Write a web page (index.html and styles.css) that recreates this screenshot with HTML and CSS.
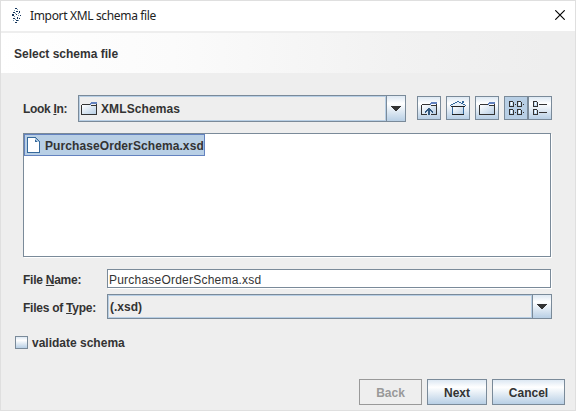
FILE: index.html
```html
<!DOCTYPE html>
<html lang="en">
<head>
<meta charset="utf-8">
<title>Import XML schema file</title>
<link rel="stylesheet" href="styles.css">
</head>
<body>
<main class="window">
  <header class="titlebar">
    <svg class="logo" width="12" height="18" viewBox="0 0 12 18" shape-rendering="crispEdges"><path d="M3 1h2v1H3zM4 4h2v1H4zM1 5h2v1H1zM7 4h1v2H7zM0 7h2v2H0zM4 7h1v1H4zM8 8h1v1H8zM1 11h2v1H1zM5 10h1v2H5zM7 11h1v1H7zM4 13h2v1H4zM3 15h2v1H3z" fill="#17365c"/><path d="M5 2h1v1H5zM2 3h1v1H2zM3 6h1v1H3zM6 6h1v1H6zM2 9h1v1H2zM6 8h1v1H6zM3 12h1v1H3zM1 13h1v1H1zM6 13h1v1H6z" fill="#7899b0"/></svg>
    <span class="title">Import XML schema file</span>
    <svg class="close" width="10" height="10" viewBox="0 0 10 10"><path d="M.3.3l9.4 9.4M9.7.3L.3 9.7" stroke="#000" stroke-width="1.15"/></svg>
  </header>
  <section class="banner">Select schema file</section>
  <section class="content">
    <div class="row look">
      <label class="look-label">Look <u>I</u>n:</label>
      <div class="combo look-combo">
        <div class="value">
          <svg width="16" height="13" viewBox="0 0 16 13" shape-rendering="crispEdges"><use href="#folder"/></svg>
          <span class="folder-name">XMLSchemas</span>
        </div>
        <div class="arrow"><svg width="10" height="5" viewBox="0 0 10 5" shape-rendering="crispEdges"><path d="M0 0h10v1H9v1H8v1H7v1H6v1H4V4H3V3H2V2H1V1H0z" fill="#333"/></svg></div>
      </div>
      <div class="tools">
        <button class="tool"><svg width="16" height="13" viewBox="0 0 16 13" shape-rendering="crispEdges"><use href="#folder"/><path d="M6 11h4v2H6z" fill="#dce8f4"/><path d="M7 6h2v1h1v1h1v1h1v2h-1v-1h-1V9H9v4H7V9H6v1H5v1H4V9h1V8h1V7h1z" fill="#31587f"/></svg></button>
        <button class="tool"><svg width="16" height="14" viewBox="0 0 16 14" shape-rendering="crispEdges"><path d="M3 6h10v7H3z" fill="url(#paper)"/><path d="M6 1h4v1h2v1h2v1h1v1H1V4h1V3h2V2h2z" fill="#e8f1f9"/><path d="M7 0h2v1H7zM5 1h2v1H5zM9 1h2v1H9zM3 2h2v1H3zM11 2h2v1h-2zM1 3h2v1H1zM13 3h2v1h-2zM0 4h1v1H0zM15 4h1v1h-1zM12 0h2v2h-2zM2 6h1v7H2zM13 6h1v7h-1z" fill="#36699b"/><path d="M1 5h14v1H1zM2 13h12v1H2z" fill="#222"/></svg></button>
        <button class="tool"><svg width="16" height="13" viewBox="0 0 16 13" shape-rendering="crispEdges"><use href="#folder"/></svg></button>
        <div class="views">
          <button class="tool on"><svg width="16" height="14" viewBox="0 0 16 14" shape-rendering="crispEdges"><use href="#item"/><use href="#item" x="8"/><use href="#item" y="8"/><use href="#item" x="8" y="8"/><path d="M7 3h1v1H7zM15 3h1v1h-1zM7 11h1v1H7zM15 11h1v1h-1z" fill="#333"/></svg></button>
          <button class="tool"><svg width="16" height="14" viewBox="0 0 16 14" shape-rendering="crispEdges"><use href="#item"/><use href="#item" y="8"/><path d="M7 3h8v1H7zM7 11h8v1H7z" fill="#333"/></svg></button>
        </div>
      </div>
    </div>
    <div class="list">
      <div class="file">
        <svg width="13" height="16" viewBox="0 0 13 16" shape-rendering="crispEdges"><path d="M0 0h9v1h1v1h1v1h1v1h1v12H0z" fill="#36699b"/><path d="M1 1h7v4h4v10H1z" fill="#fff"/><path d="M8 1h1v1h1v1h1v1h1v1H9V4H8z" fill="#a9c5df"/><path d="M8 3h1v1h1v1H8z" fill="#36699b"/></svg>
        <span class="file-name">PurchaseOrderSchema.xsd</span>
      </div>
    </div>
    <div class="row name">
      <label class="field-label">File <u>N</u>ame:</label>
      <div class="input">PurchaseOrderSchema.xsd</div>
    </div>
    <div class="row type">
      <label class="field-label">Files of <u>T</u>ype:</label>
      <div class="combo type-combo">
        <div class="value">(.xsd)</div>
        <div class="arrow"><svg width="10" height="5" viewBox="0 0 10 5" shape-rendering="crispEdges"><path d="M0 0h10v1H9v1H8v1H7v1H6v1H4V4H3V3H2V2H1V1H0z" fill="#333"/></svg></div>
      </div>
    </div>
  </section>
  <div class="check"><span class="box"></span><span>validate schema</span></div>
  <footer class="actions">
    <button class="btn back" disabled>Back</button>
    <button class="btn next">Next</button>
    <button class="btn cancel">Cancel</button>
  </footer>
</main>
<svg class="defs" width="0" height="0">
  <defs>
    <linearGradient id="paper" x2="1" y2="1"><stop stop-color="#fff"/><stop offset="1" stop-color="#b8cfe5"/></linearGradient>
    <g id="folder"><path d="M1 3h14v9H1z" fill="url(#paper)"/><path d="M0 3h1v9H0zM1 2h8v1H1zM10 3h5v1h-5zM15 2h1v10h-1zM0 12h16v1H0z" fill="#333"/><path d="M10 0h6v2h-6zM9 1h1v2H9z" fill="#6382bf"/></g>
    <g id="item"><path d="M1 0h4v1h1v5H1z" fill="#333"/><path d="M2 1h3v4H2z" fill="#c3daee"/><path d="M3 1h1v3H3z" fill="#fff"/></g>
  </defs>
</svg>
</body>
</html>
```
FILE: styles.css
```css
* { box-sizing: border-box; }
body { margin: 0; background: #eee; }
.defs { display: block; height: 0; }
.window {
  width: 576px; height: 411px; overflow: hidden;
  border: 1px solid #dfdfdf; background: #eee; color: #333;
  font: bold 12px/16px "Liberation Sans", Arial, sans-serif;
  display: flex; flex-direction: column;
}
svg { display: block; flex: none; }
button { font: inherit; color: inherit; border-radius: 0; padding: 0; }
.titlebar { height: 30px; flex: none; background: #fff; display: flex; align-items: center; padding: 0 10px 0 11px; }
.logo { margin-right: 6px; }
.close { margin-top: -2px; }
.title { flex: 1; font: 12px/16px "Noto Sans", sans-serif; color: #222; letter-spacing: -.34px; }
.banner {
  height: 40px; flex: none; margin-top: 2px; padding: 0 13px; line-height: 42px;
  background: linear-gradient(90deg, #fff 0%, #fbfbfb 30%, #f2f2f2 68%, #eee 95%);
}
.content { padding: 22px 23px 0 22px; }
.row { display: flex; align-items: center; }
.look { height: 27px; }
.look-label { width: 55px; letter-spacing: -.32px; }
.combo { display: flex; border: 1px solid #7a8a99; }
.look-combo { width: 328px; height: 27px; }
.folder-name { letter-spacing: .1px; }
.value { flex: 1; display: flex; align-items: center; gap: 4px; padding-left: 1px; border: 1px solid #b8cfe5; }
.arrow {
  width: 19px; border-left: 1px solid #7a8a99; display: flex; align-items: center; justify-content: center;
  background: linear-gradient(#dde8f3, #fff 30%, #b8cfe5);
}
.tools { display: flex; gap: 5px; margin: 0 0 1px 11px; }
.tool {
  width: 24px; height: 24px; border: 1px solid #7a8a99;
  display: flex; align-items: center; justify-content: center;
  background: linear-gradient(#dde8f3, #fff 30%, #b8cfe5);
}
.views { display: flex; }
.views .on { background: #b8cfe5; }
.list { height: 124px; margin: 11px 1px 0 0; border: 1px solid #7a8a99; background: #fff; box-shadow: 1px 1px #fff; }
.file {
  width: 181px; height: 22px; border: 1px solid #6382bf; background: #b8cfe5;
  display: flex; align-items: center; padding-left: 2px; gap: 5px;
}
.file-name { letter-spacing: .09px; padding-top: 1px; }
.name { margin-top: 12px; height: 19px; }
.field-label { width: 84px; flex: none; letter-spacing: -.25px; padding-top: 2px; }
.input {
  flex: 1; height: 19px; margin-right: 1px; padding-left: 1px;
  border: 1px solid #7a8a99; background: #fff; box-shadow: 1px 1px #fff;
  font-weight: normal; line-height: 20px; letter-spacing: .22px;
}
.type { margin-top: 6px; height: 25px; }
.type-combo { flex: 1; height: 25px; }
.check { display: flex; align-items: center; gap: 4px; margin: 15px 0 0 14px; height: 17px; }
.box { width: 13px; height: 13px; border: 1px solid #7a8a99; background: linear-gradient(#dde8f3, #fff 30%, #b8cfe5); }
.actions { display: flex; justify-content: flex-end; gap: 5px; margin: 28px 10px 0; }
.btn { height: 26px; padding-top: 1px; border: 1px solid #7a8a99; background: linear-gradient(#dde8f3, #fff 30%, #b8cfe5); }
.back { width: 63px; color: #999; border-color: #999; background: #eee; }
.next { width: 60px; }
.cancel { width: 73px; }
```
